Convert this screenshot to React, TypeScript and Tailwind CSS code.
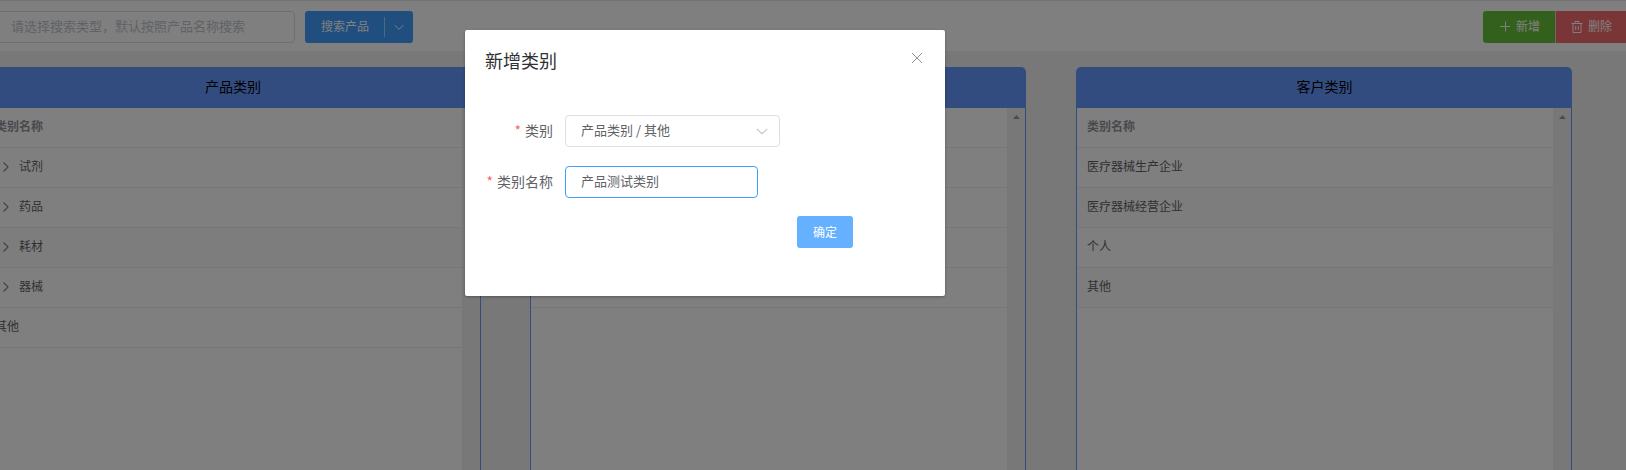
import React from "react";

type Row = { label: string; expandable?: boolean; striped?: boolean };

const productRows: Row[] = [
  { label: "试剂", expandable: true },
  { label: "药品", expandable: true },
  { label: "耗材", expandable: true, striped: true },
  { label: "器械", expandable: true },
  { label: "其他" },
];

const middleRows: Row[] = [{ label: "" }, { label: "" }, { label: "" }, { label: "" }];

const customerRows: Row[] = [
  { label: "医疗器械生产企业" },
  { label: "医疗器械经营企业", striped: true },
  { label: "个人" },
  { label: "其他", striped: true },
];

function Chevron({ className, d }: { className: string; d: string }) {
  return (
    <svg viewBox="0 0 12 12" className={className} fill="none" stroke="currentColor" strokeWidth="1.1">
      <path d={d} />
    </svg>
  );
}

const DOWN = "M0.8 3.8 L6 8.7 L11.2 3.8";
const RIGHT = "M3.5 1.5 L8 6 L3.5 10.5";

function Panel({ title, heading, rows, className }: { title: string; heading: string; rows: Row[]; className: string }) {
  return (
    <section className={`flex h-[403px] shrink-0 flex-col ${className}`}>
      <header className="flex h-[41px] shrink-0 items-center justify-center rounded-t-[5px] bg-[#6699ff] pb-[3px] pl-px text-sm text-black">
        {title}
      </header>
      <div className="flex flex-1 border-x border-[#6699ff] bg-white">
        <div className="flex flex-1 flex-col text-xs text-[#606266]">
          <div className="flex h-10 items-center border-b border-[#ebeef5] px-2.5 pb-[3px] font-bold text-[#909399]">
            {heading}
          </div>
          {rows.map((row, i) => (
            <div
              key={i}
              className={`flex h-10 items-center border-b border-[#ebeef5] px-2.5 pb-[3px] ${row.striped ? "bg-[#fafafa]" : ""}`}
            >
              {row.expandable && <Chevron className="mt-0.5 mr-[7px] ml-[5px] size-3 text-[#808080]" d={RIGHT} />}
              {row.label}
            </div>
          ))}
        </div>
        <div className="flex w-[18px] justify-center bg-[#f1f1f1] pt-[7px] pl-px">
          <svg viewBox="0 0 7 4" className="h-1 w-[7px] fill-[#999999]">
            <path d="M3.5 0 L7 4 H0 Z" />
          </svg>
        </div>
      </div>
    </section>
  );
}

export default function App() {
  return (
    <div
      lang="zh-CN"
      className="relative h-[470px] w-[1626px] overflow-hidden bg-[#f0f0f0] font-['Noto_Sans_CJK_SC',sans-serif]"
    >
      <div className="flex h-[51px] items-start border-t border-[#e6e6e6] bg-white pt-2.5">
        <div className="-ml-1 flex h-8 w-[299px] items-center rounded border border-[#dcdfe6] pb-[3px] pl-3.5 text-[13px] text-[#c0c4cc]">
          请选择搜索类型，默认按照产品名称搜索
        </div>
        <div className="ml-2.5 flex h-8 w-[108px] items-center rounded-[3px] bg-[#409eff] pl-4 text-xs text-white">
          <span className="w-[63px] pb-0.5">搜索产品</span>
          <span className="h-5 w-px bg-white/50" />
          <Chevron className="ml-[9px] size-2.5" d={DOWN} />
        </div>
        <div className="ml-auto flex w-[143px] overflow-hidden text-xs text-white">
          <div className="flex h-8 w-[72px] shrink-0 items-center rounded-l-[3px] bg-[#67c23a] pl-4">
            <svg viewBox="0 0 12 12" className="mr-[5px] size-3" fill="none" stroke="currentColor">
              <path d="M1 5.5 H11 M6.5 0.5 V10.5" />
            </svg>
            <span className="pb-0.5">新增</span>
          </div>
          <div className="flex h-8 w-[72px] shrink-0 items-center border-l border-[#fbc4c4] bg-[#f56c6c] pl-[15px]">
            <svg viewBox="0 0 12 12" className="mr-[5px] size-3" fill="none" stroke="currentColor">
              <path d="M0.5 2.5 H11.5 M4 2.5 V0.5 H8 V2.5 M2 2.5 V11.5 H10 V2.5 M4.7 5 V9 M7.3 5 V9" />
            </svg>
            <span className="pb-0.5">删除</span>
          </div>
        </div>
      </div>

      <div className="-ml-4 flex pt-4">
        <Panel title="产品类别" heading="类别名称" rows={productRows} className="w-[497px]" />
        <Panel title="" heading="" rows={middleRows} className="ml-[49px] w-[496px]" />
        <Panel title="客户类别" heading="类别名称" rows={customerRows} className="ml-[50px] w-[496px]" />
      </div>

      <div className="absolute inset-0 flex items-start bg-black/50 pt-[30px] pl-[465px]">
        <div className="h-[266px] w-[480px] rounded-xs bg-white shadow-[0_1px_3px_rgba(0,0,0,0.3)]">
          <div className="flex h-[85px] items-start justify-between pt-[18px] pr-[22px] pl-5">
            <h2 className="text-lg leading-6 text-[#303133]">新增类别</h2>
            <svg viewBox="0 0 12 12" className="mt-1 size-3" fill="none" stroke="#909399">
              <path d="M1 1 L11 11 M11 1 L1 11" />
            </svg>
          </div>
          <div className="flex items-center text-[13px] text-[#606266]">
            <label className="flex w-[100px] justify-end pr-3 pb-[3px] text-sm">
              <span className="mr-1 text-[#f56c6c]">*</span>类别
            </label>
            <div className="flex h-8 w-[215px] items-center justify-between rounded border border-[#dcdfe6] pr-[11px] pl-[15px]">
              <span className="pb-[3px]">产品类别 / 其他</span>
              <Chevron className="size-3 text-[#c0c4cc]" d={DOWN} />
            </div>
          </div>
          <div className="mt-[19px] flex items-center text-[13px] text-[#606266]">
            <label className="flex w-[100px] justify-end pr-3 pb-[3px] text-sm">
              <span className="mr-1 text-[#f56c6c]">*</span>类别名称
            </label>
            <div className="flex h-8 w-[193px] items-center rounded border border-[#409eff] pb-[3px] pl-[15px]">
              产品测试类别
            </div>
          </div>
          <button className="mt-[18px] ml-[332px] flex h-8 w-14 items-center justify-center rounded-[3px] bg-[#66b1ff] text-xs text-white">
            确定
          </button>
        </div>
      </div>
    </div>
  );
}
